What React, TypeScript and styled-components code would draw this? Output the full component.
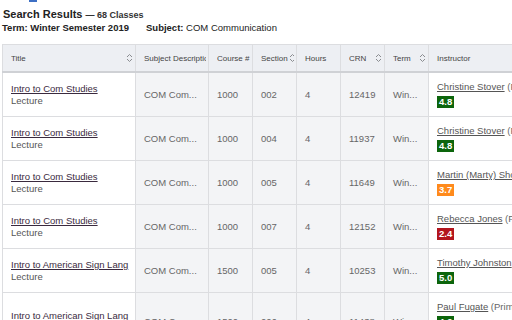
import React from 'react';
import styled, { createGlobalStyle } from 'styled-components';

const Global = createGlobalStyle`
  html, body { margin: 0; padding: 0; background: #fff; overflow: hidden; }
  body { font-family: "Liberation Sans", Arial, sans-serif; }
`;

const Page = styled.div`
  width: 512px;
  height: 320px;
  overflow: hidden;
`;

const TopMark = styled.div`
  margin-left: 29px;
  width: 8px;
  height: 2px;
  background: #3d6fc4;
`;

const Heading = styled.h1`
  margin: 6px 0 0 3px;
  font-size: 11px;
  line-height: 13px;
  font-weight: bold;
  color: #222;
`;

const Count = styled.span`
  font-size: 9px;
  font-weight: bold;
  color: #333;
`;

const Meta = styled.div`
  margin-left: 2px;
  display: flex;
  gap: 17px;
  font-size: 9.5px;
  line-height: 11px;
  color: #222;
`;

const TableWrap = styled.div`
  margin: 11px 0 0 2px;
  overflow: hidden;
`;

const Table = styled.table`
  border-collapse: collapse;
  table-layout: fixed;
  width: 626px;
`;

const Th = styled.th`
  height: 26px;
  padding: 0 2px 0 8px;
  background: #edeff3;
  border: 1px solid #dcdde0;
  border-bottom: 2px solid #cfd1d5;
  font-size: 8px;
  font-weight: normal;
  color: #444;
  text-align: left;
  overflow: hidden;
`;

const HeadInner = styled.div`
  display: flex;
  align-items: center;
  white-space: nowrap;
  overflow: hidden;
`;

const HeadLabel = styled.span`
  flex-shrink: 0;
`;

const SortIcon = styled.svg<{ $tight?: boolean }>`
  flex-shrink: 0;
  margin-left: ${(p) => (p.$tight ? '1px' : 'auto')};
`;

const Td = styled.td<{ $shade?: boolean }>`
  height: 27px;
  padding: 8px 8px;
  border: 1px solid #dcdde0;
  background: ${(p) => (p.$shade ? '#f3f4f6' : '#fff')};
  font-size: 9.5px;
  line-height: 12px;
  color: #666;
  vertical-align: middle;
  white-space: nowrap;
  overflow: hidden;
`;

const TitleLink = styled.a`
  display: block;
  color: #3a2a3e;
  text-decoration: underline;
`;

const SubLine = styled.div`
  color: #555;
`;

const NameLine = styled.div`
  color: #666;
`;

const Name = styled.a`
  color: #555;
  text-decoration: underline;
`;

const Badge = styled.span<{ $bg: string }>`
  display: inline-block;
  margin: 3px 0 0 0;
  padding: 0 2px;
  height: 12px;
  line-height: 12px;
  background: ${(p) => p.$bg};
  color: #fff;
  font-weight: bold;
  font-size: 9.5px;
`;

const Instructor = styled.div`
  & + & {
    margin-top: 3px;
  }
`;

const Sort = ({ tight }: { tight?: boolean }) => (
  <SortIcon $tight={tight} width="7" height="10" viewBox="0 0 7 10">
    <path d="M1 4 L3.5 1.5 L6 4 M1 6 L3.5 8.5 L6 6" fill="none" stroke="#8a8c90" strokeWidth="1" />
  </SortIcon>
);

type Prof = { name: string; rating?: string; color?: string };
type Row = {
  title: string;
  course: string;
  section: string;
  crn: string;
  profs: Prof[];
};

const GREEN = '#0c650c';
const ORANGE = '#ff8a1c';
const RED = '#b3161e';

const rows: Row[] = [
  { title: 'Intro to Com Studies', course: '1000', section: '002', crn: '12419', profs: [{ name: 'Christine Stover', rating: '4.8', color: GREEN }] },
  { title: 'Intro to Com Studies', course: '1000', section: '004', crn: '11937', profs: [{ name: 'Christine Stover', rating: '4.8', color: GREEN }] },
  { title: 'Intro to Com Studies', course: '1000', section: '005', crn: '11649', profs: [{ name: 'Martin (Marty) Shoemaker', rating: '3.7', color: ORANGE }] },
  { title: 'Intro to Com Studies', course: '1000', section: '007', crn: '12152', profs: [{ name: 'Rebecca Jones', rating: '2.4', color: RED }] },
  { title: 'Intro to American Sign Lang', course: '1500', section: '005', crn: '10253', profs: [{ name: 'Timothy Johnston', rating: '5.0', color: GREEN }] },
  {
    title: 'Intro to American Sign Lang',
    course: '1500',
    section: '006',
    crn: '11438',
    profs: [
      { name: 'Paul Fugate', rating: '4.6', color: GREEN },
      { name: 'Jennifer Rowley' },
    ],
  },
];

const widths = [133, 73, 44, 44, 44, 44, 44, 200];

export default function App() {
  return (
    <Page>
      <Global />
      <TopMark />
      <Heading>
        Search Results <Count>— 68 Classes</Count>
      </Heading>
      <Meta>
        <span>
          <b>Term: Winter Semester 2019</b>
        </span>
        <span>
          <b>Subject:</b> COM Communication
        </span>
      </Meta>
      <TableWrap>
        <Table>
          <colgroup>
            {widths.map((w, i) => (
              <col key={i} style={{ width: w }} />
            ))}
          </colgroup>
          <thead>
            <tr>
              <Th>
                <HeadInner>
                  <HeadLabel>Title</HeadLabel>
                  <Sort />
                </HeadInner>
              </Th>
              <Th>
                <HeadInner>
                  <HeadLabel>Subject Description</HeadLabel>
                  <Sort />
                </HeadInner>
              </Th>
              <Th>
                <HeadInner>
                  <HeadLabel>Course #</HeadLabel>
                  <Sort />
                </HeadInner>
              </Th>
              <Th>
                <HeadInner>
                  <HeadLabel>Section</HeadLabel>
                  <Sort tight />
                </HeadInner>
              </Th>
              <Th>
                <HeadInner>
                  <HeadLabel>Hours</HeadLabel>
                </HeadInner>
              </Th>
              <Th>
                <HeadInner>
                  <HeadLabel>CRN</HeadLabel>
                  <Sort />
                </HeadInner>
              </Th>
              <Th>
                <HeadInner>
                  <HeadLabel>Term</HeadLabel>
                  <Sort />
                </HeadInner>
              </Th>
              <Th>
                <HeadInner>
                  <HeadLabel>Instructor</HeadLabel>
                </HeadInner>
              </Th>
            </tr>
          </thead>
          <tbody>
            {rows.map((r, i) => (
              <tr key={i}>
                <Td>
                  <TitleLink href="#">{r.title}</TitleLink>
                  <SubLine>Lecture</SubLine>
                </Td>
                <Td $shade>COM Com...</Td>
                <Td $shade>{r.course}</Td>
                <Td $shade>{r.section}</Td>
                <Td $shade>4</Td>
                <Td $shade>{r.crn}</Td>
                <Td $shade>Win...</Td>
                <Td>
                  {r.profs.map((p, j) => (
                    <Instructor key={j}>
                      <NameLine>
                        <Name href="#">{p.name}</Name> (Primary)
                      </NameLine>
                      {p.rating && p.color && <Badge $bg={p.color}>{p.rating}</Badge>}
                    </Instructor>
                  ))}
                </Td>
              </tr>
            ))}
          </tbody>
        </Table>
      </TableWrap>
    </Page>
  );
}
